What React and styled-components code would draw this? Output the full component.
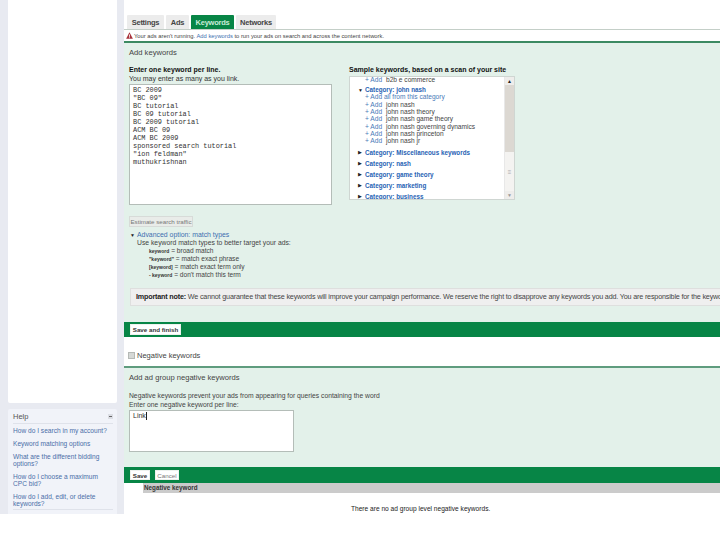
import styled, { createGlobalStyle } from 'styled-components';

const Global = createGlobalStyle`
  html, body {
    margin: 0;
    padding: 0;
    background: #fff;
  }
  body {
    width: 720px;
    height: 540px;
    overflow: hidden;
    font-family: "Liberation Sans", Arial, sans-serif;
    font-size: 8px;
    color: #333;
  }
`;

const Page = styled.div`
  display: flex;
  width: 720px;
  height: 514px;
  overflow: hidden;
`;

const Side = styled.aside`
  flex: 0 0 124px;
  box-sizing: border-box;
  padding: 0 7px 0 8px;
  background: #e8eaf1;
  display: flex;
  flex-direction: column;
  gap: 6px;
`;

const SideBlank = styled.div`
  flex: 0 0 403px;
  background: #fff;
  border-radius: 0 0 2px 2px;
`;

const HelpBox = styled.div`
  flex: 1;
  background: #f1f3f9;
  border-radius: 2px 2px 0 0;
  padding: 3px 4px 0 5px;
`;

const HelpHead = styled.div`
  display: flex;
  justify-content: space-between;
  align-items: center;
  height: 9px;
  padding-bottom: 2px;
  border-bottom: 1px solid #dfe2ea;
  font-size: 7.5px;
  color: #555;
`;

const MinusBtn = styled.span`
  width: 5px;
  height: 5px;
  background: #dcdee5;
  position: relative;
  &::after {
    content: '';
    position: absolute;
    left: 1px;
    right: 1px;
    top: 2px;
    height: 1px;
    background: #666;
  }
`;

const HelpLinks = styled.div`
  padding: 3px 0 2px;
  border-bottom: 1px solid #dfe2ea;
`;

const HelpLink = styled.div`
  margin-top: 6px;
  font-size: 6.6px;
  line-height: 7px;
  color: #4a6ea8;
  &:first-of-type {
    margin-top: 0;
  }
`;

const Main = styled.main`
  flex: 1;
  min-width: 0;
  background: #fff;
  padding-top: 15px;
  display: flex;
  flex-direction: column;
`;

const Tabs = styled.div`
  display: flex;
  gap: 2px;
  padding-left: 3px;
  height: 14px;
`;

const Tab = styled.div`
  display: flex;
  align-items: center;
  justify-content: center;
  width: ${(p) => p.$w}px;
  height: 14px;
  border-radius: 1px 1px 0 0;
  font-size: 7.5px;
  font-weight: bold;
  letter-spacing: -0.25px;
  color: ${(p) => (p.$active ? '#c9ecd8' : '#444')};
  background: ${(p) => (p.$active ? '#078546' : '#ececec')};
`;

const Alert = styled.div`
  display: flex;
  align-items: center;
  gap: 1px;
  box-sizing: border-box;
  height: 14px;
  padding-left: 2px;
  border-top: 1px solid #c4cfc8;
  border-bottom: 2px solid #3c8a62;
  font-size: 5.8px;
  color: #444;
  white-space: nowrap;
`;

const Link = styled.span`
  color: ${(p) => p.$color || '#3d6fb0'};
`;

const GreenPanel = styled.section`
  background: #e3f1ea;
  box-sizing: border-box;
  height: ${(p) => p.$h}px;
  padding: ${(p) => p.$pad};
  overflow: hidden;
`;

const PanelTitle = styled.div`
  font-size: 7.6px;
  line-height: 10px;
  color: #444;
`;

const Columns = styled.div`
  display: flex;
  margin-top: 7px;
  gap: 17px;
`;

const Col = styled.div`
  width: ${(p) => p.$w}px;
  flex: none;
`;

const Label = styled.div`
  font-size: 7px;
  line-height: 9px;
  font-weight: ${(p) => (p.$bold ? 'bold' : 'normal')};
  color: ${(p) => (p.$bold ? '#111' : '#333')};
  white-space: nowrap;
`;

const TextBox = styled.div`
  box-sizing: border-box;
  width: ${(p) => p.$w}px;
  height: ${(p) => p.$h}px;
  margin-top: 1px;
  background: #fff;
  border: 1px solid #b4bdb8;
  padding: 1px 3px;
  white-space: pre;
  font-family: ${(p) => (p.$sans ? '"Liberation Sans", Arial, sans-serif' : '"Liberation Mono", "Courier New", monospace')};
  font-size: ${(p) => (p.$sans ? '7px' : '6.9px')};
  line-height: 8px;
  color: #333;
`;

const Caret = styled.span`
  display: inline-block;
  width: 1px;
  height: 8px;
  background: #222;
  vertical-align: top;
`;

const SampleBox = styled.div`
  display: flex;
  box-sizing: border-box;
  width: 166px;
  height: 124px;
  margin-top: 2px;
  background: #fff;
  border: 1px solid #cfd6d2;
  overflow: hidden;
`;

const SampleList = styled.div`
  flex: 1;
  margin-top: -1px;
`;

const Scrollbar = styled.div`
  flex: 0 0 9px;
  display: flex;
  flex-direction: column;
  background: #f4f3f1;
  border-left: 1px solid #e8e8e8;
`;

const ScrollBtn = styled.div`
  height: 8px;
  background: #eeedeb;
  display: flex;
  align-items: center;
  justify-content: center;
  font-size: 5px;
  color: ${(p) => (p.$dim ? '#999' : '#222')};
`;

const ScrollThumb = styled.div`
  height: 67px;
  background: #dcd8d2;
`;

const ScrollTrack = styled.div`
  flex: 1;
  display: flex;
  align-items: center;
  justify-content: center;
  font-size: 6px;
  color: #aaa;
`;

const AddRow = styled.div`
  display: flex;
  height: 7.33px;
  line-height: 7px;
  padding-left: 15px;
  font-size: 6.6px;
  white-space: nowrap;
  color: #444;
`;

const AddLink = styled.span`
  flex: 0 0 21px;
  color: #4a7ab8;
`;

const CatRow = styled.div`
  display: flex;
  align-items: center;
  height: 11px;
  margin: ${(p) => (p.$open ? '1px 0 -2px' : '0')};
  padding-left: 8px;
  font-size: 6.3px;
  font-weight: bold;
  color: #1f62b4;
  white-space: nowrap;
`;

const Arrow = styled.span`
  flex: 0 0 6px;
  margin-right: 1px;
  font-size: 5px;
  font-weight: normal;
  display: flex;
  align-items: center;
  color: #222;
`;

const AddGroup = styled.div`
  margin-bottom: 2px;
`;

const Button = styled.div`
  box-sizing: border-box;
  width: ${(p) => p.$w}px;
  height: ${(p) => p.$h || 11}px;
  display: flex;
  align-items: center;
  justify-content: center;
  background: ${(p) => (p.$plain ? '#fff' : '#e9ece9')};
  border: 1px solid ${(p) => (p.$plain ? '#eef2ef' : '#d7dbd8')};
  font-size: 6.2px;
  font-weight: ${(p) => (p.$strong ? 'bold' : 'normal')};
  color: ${(p) => (p.$faint ? '#777' : '#333')};
  white-space: nowrap;
`;

const EstimateRow = styled.div`
  margin-top: 11px;
`;

const Advanced = styled.div`
  margin-top: 4px;
  font-size: 6.8px;
  line-height: 8px;
  color: #444;
`;

const AdvHead = styled.div`
  display: flex;
  align-items: center;
  padding-left: 1px;
  font-size: 6.9px;
`;

const AdvBody = styled.div`
  padding-left: 8px;
`;

const MatchList = styled.div`
  padding-left: 12px;
`;

const MatchRow = styled.div`
  white-space: nowrap;
  font-size: 6.6px;
  b {
    font-size: 5px;
    color: #333;
  }
`;

const Note = styled.div`
  box-sizing: border-box;
  margin: 9px -6px 0 1px;
  height: 18px;
  line-height: 16px;
  padding-left: 5px;
  background: #efefef;
  border: 1px solid #dedfde;
  font-size: 7.2px;
  letter-spacing: -0.18px;
  color: #444;
  white-space: nowrap;
  overflow: hidden;
  b {
    color: #222;
  }
`;

const ActionBar = styled.div`
  display: flex;
  align-items: center;
  gap: 5px;
  box-sizing: border-box;
  height: ${(p) => p.$h}px;
  padding-left: 6px;
  background: #078546;
`;

const Collapsed = styled.div`
  display: flex;
  align-items: center;
  gap: 2px;
  box-sizing: border-box;
  height: 31px;
  padding: 7px 0 0 4px;
  border-bottom: 2px solid #5f9c7e;
  font-size: 7.5px;
  color: #444;
`;

const CheckIcon = styled.span`
  width: 5px;
  height: 5px;
  background: #d5d8d6;
  border: 1px solid #b5b9b6;
`;

const Para = styled.div`
  margin-top: ${(p) => p.$mt || 0}px;
  font-size: 6.75px;
  line-height: 9px;
  color: #444;
  white-space: nowrap;
`;

const TableHead = styled.div`
  margin-left: 19px;
  height: 10px;
  line-height: 10px;
  padding-left: 1px;
  background: #cbcbcb;
  font-size: 6.3px;
  font-weight: bold;
  color: #333;
`;

const Empty = styled.div`
  margin-top: 11px;
  padding-left: 227px;
  font-size: 6.6px;
  line-height: 10px;
  color: #222;
  white-space: nowrap;
`;

const keywords = `BC 2009
"BC 09"
BC tutorial
BC 09 tutorial
BC 2009 tutorial
ACM BC 09
ACM BC 2009
sponsored search tutorial
"ion feldman"
muthukrishnan`;

const nashTerms = ['john nash', 'john nash theory', 'john nash game theory', 'john nash governing dynamics', 'john nash princeton', 'john nash jr'];
const closedCats = ['Miscellaneous keywords', 'nash', 'game theory', 'marketing', 'business'];
const helpLinks = [
  'How do I search in my account?',
  'Keyword matching options',
  'What are the different bidding options?',
  'How do I choose a maximum CPC bid?',
  'How do I add, edit, or delete keywords?',
];

const App = () => (
  <>
    <Global />
    <Page>
      <Side>
        <SideBlank />
        <HelpBox>
          <HelpHead>
            Help
            <MinusBtn />
          </HelpHead>
          <HelpLinks>
            {helpLinks.map((t) => (
              <HelpLink key={t}>{t}</HelpLink>
            ))}
          </HelpLinks>
        </HelpBox>
      </Side>
      <Main>
        <Tabs>
          <Tab $w={37}>Settings</Tab>
          <Tab $w={23}>Ads</Tab>
          <Tab $w={43} $active>Keywords</Tab>
          <Tab $w={40}>Networks</Tab>
        </Tabs>
        <Alert>
          <svg width="7" height="7" viewBox="0 0 10 10">
            <path d="M5 0.5 L9.8 9.5 H0.2 Z" fill="#a8323c" />
            <rect x="4.4" y="3.5" width="1.2" height="3.4" fill="#fff" />
            <rect x="4.4" y="7.6" width="1.2" height="1.2" fill="#fff" />
          </svg>
          <span>
            Your ads aren't running. <Link>Add keywords</Link> to run your ads on search and across the content network.
          </span>
        </Alert>
        <GreenPanel $h={279} $pad="5px 0 0 5px">
          <PanelTitle>Add keywords</PanelTitle>
          <Columns>
            <Col $w={203}>
              <Label $bold>Enter one keyword per line.</Label>
              <Label>You may enter as many as you link.</Label>
              <TextBox $w={203} $h={121}>{keywords}</TextBox>
            </Col>
            <Col $w={166}>
              <Label $bold>Sample keywords, based on a scan of your site</Label>
              <SampleBox>
                <SampleList>
                  <AddRow><AddLink>+ Add</AddLink>b2b e commerce</AddRow>
                  <CatRow $open><Arrow>▼</Arrow>Category: john nash</CatRow>
                  <AddGroup>
                    <AddRow><Link $color="#4a7ab8">+ Add all from this category</Link></AddRow>
                    {nashTerms.map((t) => (
                      <AddRow key={t}><AddLink>+ Add</AddLink>{t}</AddRow>
                    ))}
                  </AddGroup>
                  {closedCats.map((c) => (
                    <CatRow key={c}><Arrow>▶</Arrow>Category: {c}</CatRow>
                  ))}
                </SampleList>
                <Scrollbar>
                  <ScrollBtn>▲</ScrollBtn>
                  <ScrollThumb />
                  <ScrollTrack>≡</ScrollTrack>
                  <ScrollBtn $dim>▼</ScrollBtn>
                </Scrollbar>
              </SampleBox>
            </Col>
          </Columns>
          <EstimateRow>
            <Button $w={64} $faint>Estimate search traffic</Button>
          </EstimateRow>
          <Advanced>
            <AdvHead><Arrow>▼</Arrow><Link>Advanced option: match types</Link></AdvHead>
            <AdvBody>
              Use keyword match types to better target your ads:
              <MatchList>
                <MatchRow><b>keyword</b> = broad match</MatchRow>
                <MatchRow><b>"keyword"</b> = match exact phrase</MatchRow>
                <MatchRow><b>[keyword]</b> = match exact term only</MatchRow>
                <MatchRow><b>- keyword</b> = don't match this term</MatchRow>
              </MatchList>
            </AdvBody>
          </Advanced>
          <Note>
            <b>Important note:</b> We cannot guarantee that these keywords will improve your campaign performance. We reserve the right to disapprove any keywords you add. You are responsible for the keywords you select.
          </Note>
        </GreenPanel>
        <ActionBar $h={15}>
          <Button $w={51} $plain $strong>Save and finish</Button>
        </ActionBar>
        <Collapsed>
          <CheckIcon />
          <span>Negative keywords</span>
        </Collapsed>
        <GreenPanel $h={99} $pad="5px 0 0 5px">
          <PanelTitle>Add ad group negative keywords</PanelTitle>
          <Para $mt={8}>Negative keywords prevent your ads from appearing for queries containing the word</Para>
          <Para>Enter one negative keyword per line:</Para>
          <TextBox $w={165} $h={42} $sans>Link<Caret /></TextBox>
        </GreenPanel>
        <ActionBar $h={16}>
          <Button $w={20} $h={10} $plain $strong>Save</Button>
          <Button $w={24} $h={10} $plain $faint>Cancel</Button>
        </ActionBar>
        <TableHead>Negative keyword</TableHead>
        <Empty>There are no ad group level negative keywords.</Empty>
      </Main>
    </Page>
  </>
);

export default App;
